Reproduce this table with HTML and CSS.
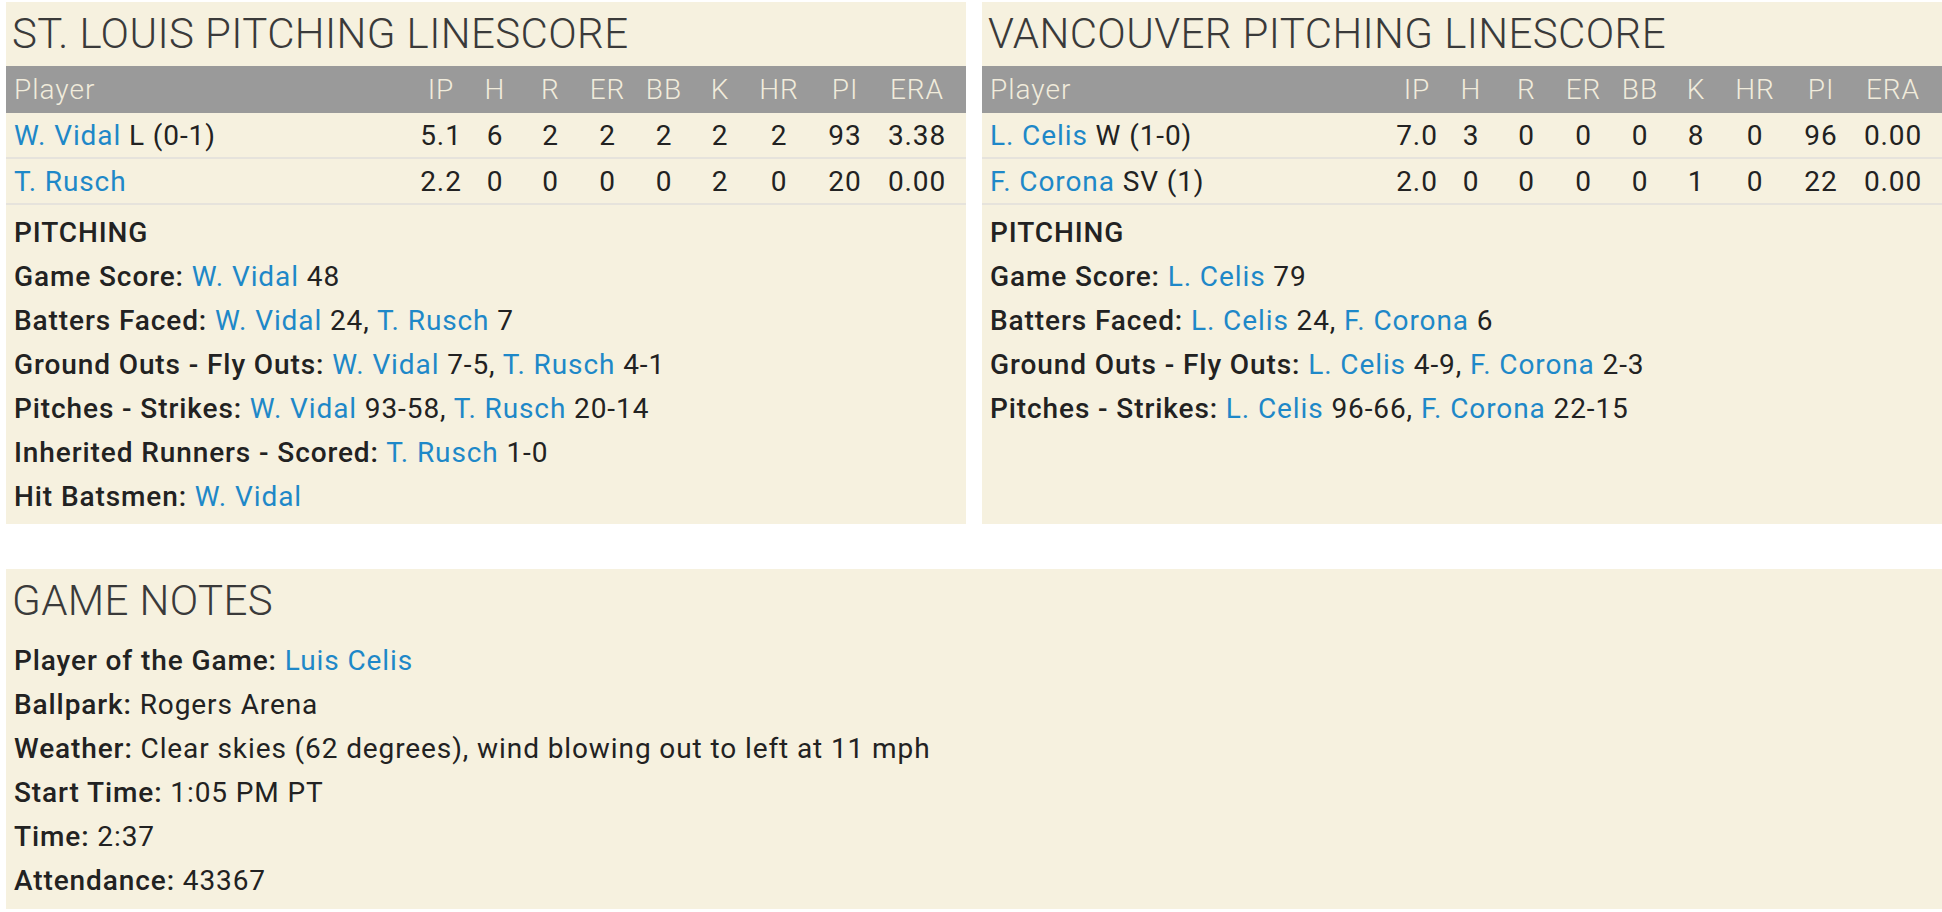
FILE: index.html
```html
<!DOCTYPE html>
<html lang="en">
<head>
    <meta charset="UTF-8">
    <title>Box Score - Pitching</title>
    <link rel="stylesheet" href="styles.css">
</head>
<body>
    <div class="linescores">
        <div class="panel">
            <h2 class="panel-title">ST. LOUIS PITCHING LINESCORE</h2>
            <table class="linescore">
                <colgroup>
                    <col>
                    <col class="c-ip"><col class="c-h"><col class="c-r"><col class="c-er"><col class="c-bb">
                    <col class="c-k"><col class="c-hr"><col class="c-pi"><col class="c-era">
                </colgroup>
                <thead>
                    <tr>
                        <th class="player">Player</th>
                        <th>IP</th><th>H</th><th>R</th><th>ER</th><th>BB</th><th>K</th><th>HR</th><th>PI</th><th class="last">ERA</th>
                    </tr>
                </thead>
                <tbody>
                    <tr>
                        <td class="player"><a href="#">W. Vidal</a> L (0-1)</td>
                        <td>5.1</td><td>6</td><td>2</td><td>2</td><td>2</td><td>2</td><td>2</td><td>93</td><td class="last">3.38</td>
                    </tr>
                    <tr>
                        <td class="player"><a href="#">T. Rusch</a></td>
                        <td>2.2</td><td>0</td><td>0</td><td>0</td><td>0</td><td>2</td><td>0</td><td>20</td><td class="last">0.00</td>
                    </tr>
                </tbody>
            </table>
            <div class="details">
                <div class="section-head">PITCHING</div>
                <div><b>Game Score:</b> <a href="#">W. Vidal</a> 48</div>
                <div><b>Batters Faced:</b> <a href="#">W. Vidal</a> 24, <a href="#">T. Rusch</a> 7</div>
                <div><b>Ground Outs - Fly Outs:</b> <a href="#">W. Vidal</a> 7-5, <a href="#">T. Rusch</a> 4-1</div>
                <div><b>Pitches - Strikes:</b> <a href="#">W. Vidal</a> 93-58, <a href="#">T. Rusch</a> 20-14</div>
                <div><b>Inherited Runners - Scored:</b> <a href="#">T. Rusch</a> 1-0</div>
                <div><b>Hit Batsmen:</b> <a href="#">W. Vidal</a></div>
            </div>
        </div>

        <div class="panel">
            <h2 class="panel-title">VANCOUVER PITCHING LINESCORE</h2>
            <table class="linescore">
                <colgroup>
                    <col>
                    <col class="c-ip"><col class="c-h"><col class="c-r"><col class="c-er"><col class="c-bb">
                    <col class="c-k"><col class="c-hr"><col class="c-pi"><col class="c-era">
                </colgroup>
                <thead>
                    <tr>
                        <th class="player">Player</th>
                        <th>IP</th><th>H</th><th>R</th><th>ER</th><th>BB</th><th>K</th><th>HR</th><th>PI</th><th class="last">ERA</th>
                    </tr>
                </thead>
                <tbody>
                    <tr>
                        <td class="player"><a href="#">L. Celis</a> W (1-0)</td>
                        <td>7.0</td><td>3</td><td>0</td><td>0</td><td>0</td><td>8</td><td>0</td><td>96</td><td class="last">0.00</td>
                    </tr>
                    <tr>
                        <td class="player"><a href="#">F. Corona</a> SV (1)</td>
                        <td>2.0</td><td>0</td><td>0</td><td>0</td><td>0</td><td>1</td><td>0</td><td>22</td><td class="last">0.00</td>
                    </tr>
                </tbody>
            </table>
            <div class="details">
                <div class="section-head">PITCHING</div>
                <div><b>Game Score:</b> <a href="#">L. Celis</a> 79</div>
                <div><b>Batters Faced:</b> <a href="#">L. Celis</a> 24, <a href="#">F. Corona</a> 6</div>
                <div><b>Ground Outs - Fly Outs:</b> <a href="#">L. Celis</a> 4-9, <a href="#">F. Corona</a> 2-3</div>
                <div><b>Pitches - Strikes:</b> <a href="#">L. Celis</a> 96-66, <a href="#">F. Corona</a> 22-15</div>
            </div>
        </div>
    </div>

    <div class="panel notes">
        <h2 class="panel-title">GAME NOTES</h2>
        <div class="details">
            <div><b>Player of the Game:</b> <a href="#">Luis Celis</a></div>
            <div><b>Ballpark:</b> Rogers Arena</div>
            <div><b>Weather:</b> Clear skies (62 degrees), wind blowing out to left at 11 mph</div>
            <div><b>Start Time:</b> 1:05 PM PT</div>
            <div><b>Time:</b> 2:37</div>
            <div><b>Attendance:</b> 43367</div>
        </div>
    </div>
</body>
</html>
```

FILE: styles.css
```css
body {
    margin: 0;
    padding: 2px 0 0 6px;
    font-family: Roboto, "Liberation Sans", sans-serif;
    font-size: 28px;
    letter-spacing: 0.9px;
    color: #222;
    background: #fff;
}
a {
    color: #1e88c8;
    text-decoration: none;
}
.linescores {
    display: grid;
    grid-template-columns: 1fr 1fr;
    gap: 16px;
}
.panel {
    background-color: #f6f1df;
}
.panel-title {
    margin: 0;
    padding-left: 6px;
    font-size: 42px;
    font-weight: 300;
    line-height: 64px;
    letter-spacing: 0.4px;
    color: #3a3a3a;
}
.linescore {
    width: 100%;
    table-layout: fixed;
    border-collapse: collapse;
}
.c-ip { width: 54px; }
.c-h { width: 54px; }
.c-r { width: 57px; }
.c-er { width: 57px; }
.c-bb { width: 56px; }
.c-k { width: 56px; }
.c-hr { width: 62px; }
.c-pi { width: 70px; }
.c-era { width: 86px; }
.linescore th {
    height: 47px;
    padding: 0;
    background-color: #9a9a9a;
    color: #f1ecdc;
    font-size: 28px;
    font-weight: 300;
    letter-spacing: 1px;
    text-align: center;
}
.linescore td {
    height: 44px;
    padding: 0;
    text-align: center;
    border-bottom: 2px solid #e6e3dc;
    white-space: nowrap;
}
.linescore .player {
    text-align: left;
    padding-left: 8px;
}
.linescore .last {
    padding-right: 12px;
}
.details {
    padding: 6px 8px 5px;
    line-height: 44px;
}
.details b {
    font-weight: 500;
}
.section-head {
    font-weight: 500;
}
.notes {
    margin-top: 45px;
}
.notes .details {
    padding: 6px 8px 6px;
}
```
